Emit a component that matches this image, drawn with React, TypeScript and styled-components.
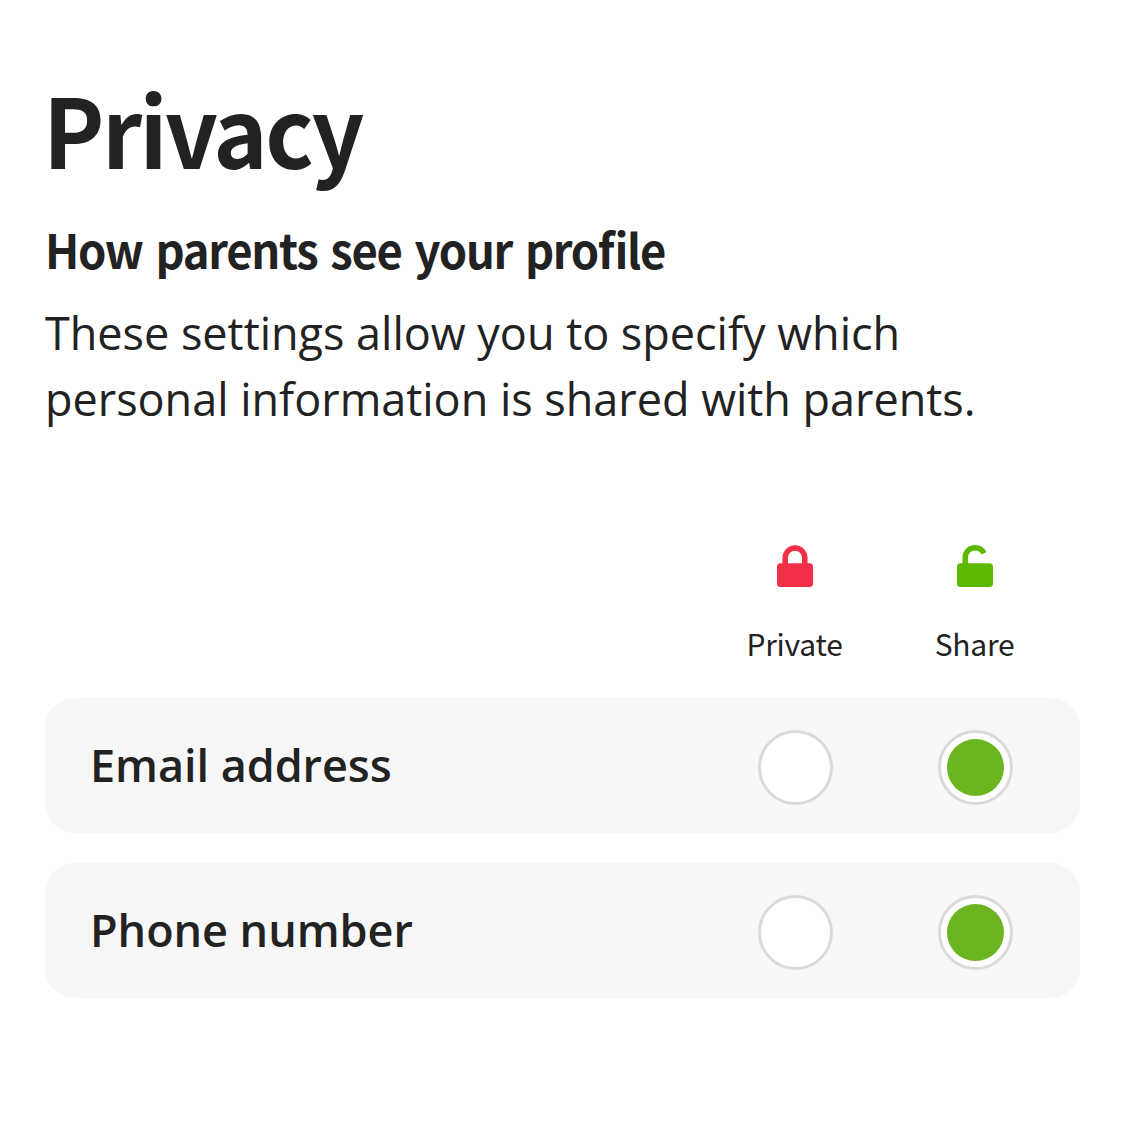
import React from "react";
import styled, { createGlobalStyle } from "styled-components";

const GlobalStyle = createGlobalStyle`
  * { box-sizing: border-box; }
  body { margin: 0; background: #fff; color: #222; font-family: "Open Sans", sans-serif; }
`;
const Page = styled.main`
  min-height: 1141px;
  padding: 73px 45px 0;
`;
const Title = styled.h1`
  margin: 0 0 0 -2px;
  height: 144px;
  line-height: 109px;
  font-family: "Noto Sans CJK SC", sans-serif;
  font-size: 96px;
  font-weight: 700;
  letter-spacing: -2.7px;
  white-space: nowrap;
`;
const Stretch = styled.span<{ $x: number }>`
  display: inline-block;
  transform: scaleX(${(p) => p.$x});
  transform-origin: left center;
`;
const Subtitle = styled.h2`
  margin: 0;
  height: 83px;
  line-height: 63px;
  font-family: "Noto Sans CJK SC", sans-serif;
  font-size: 47.5px;
  font-weight: 700;
  letter-spacing: -1.35px;
  word-spacing: 4px;
  font-feature-settings: "liga" 1;
  white-space: nowrap;
`;
const Description = styled.p`
  margin: 0;
  font-size: 45px;
  line-height: 66px;
  letter-spacing: -0.02px;
  white-space: nowrap;
`;
const Columns = styled.header`
  display: grid;
  grid-template-columns: 1fr 180px 180px;
  margin-top: 113px;
  padding-right: 15px;
  height: 153px;
`;
const Column = styled.div`
  display: flex;
  flex-direction: column;
  align-items: center;
  font: 30px/44px "Noto Sans CJK SC", sans-serif;
  svg { display: block; width: 36px; height: 42px; margin-bottom: 34px; }
`;
const ColumnName = styled.span`
  margin-right: 1px;
  letter-spacing: -0.25px;
`;
const Row = styled.section`
  display: grid;
  grid-template-columns: 1fr 180px 180px;
  align-items: center;
  height: 135px;
  margin-bottom: 30px;
  padding: 3px 15px 0 45px;
  border-radius: 30px;
  background: #f7f7f7;
`;
const Label = styled.span`
  padding-bottom: 4px;
  font-size: 45px;
  font-weight: 600;
  line-height: 66px;
  letter-spacing: -0.05px;
`;
const Radio = styled.button`
  display: grid;
  place-items: center;
  justify-self: center;
  width: 75px;
  height: 75px;
  padding: 0;
  border: 3px solid #dadada;
  border-radius: 50%;
  background: #fff;
`;
const Dot = styled.span`
  width: 57px;
  height: 57px;
  border-radius: 50%;
  background: #6bb521;
`;

function Setting({ label }: { label: string }) {
  const [shared, setShared] = React.useState(true);
  return (
    <Row role="radiogroup" aria-label={label}>
      <Label>{label}</Label>
      <Radio role="radio" aria-checked={!shared} onClick={() => setShared(false)}>{!shared && <Dot />}</Radio>
      <Radio role="radio" aria-checked={shared} onClick={() => setShared(true)}>{shared && <Dot />}</Radio>
    </Row>
  );
}

export default function App() {
  return (
    <>
      <GlobalStyle />
      <Page>
        <Title><Stretch $x={0.96}>Privacy</Stretch></Title>
        <Subtitle><Stretch $x={0.955}>How parents see your profile</Stretch></Subtitle>
        <Description>These settings allow you to specify which<br />personal information is shared with parents.</Description>
        <Columns>
          <span />
          <Column>
            <svg viewBox="0 0 36 42" fill="#f12f47"><rect y="18.3" width="36" height="23.7" rx="3.5" /><path d="M8.2 20v-7.2a9.8 9.8 0 0 1 19.6 0V20" fill="none" stroke="#f12f47" strokeWidth="5.5" /></svg>
            <ColumnName>Private</ColumnName>
          </Column>
          <Column>
            <svg viewBox="0 0 36 42" fill="#5bb900"><rect y="18.3" width="36" height="23.7" rx="3.5" /><path d="M8.2 20v-7.2C8.2 7 12.5 2.8 18 2.8c4 0 7.3 2 9.1 5.5" fill="none" stroke="#5bb900" strokeWidth="5.5" /></svg>
            <ColumnName>Share</ColumnName>
          </Column>
        </Columns>
        <Setting label="Email address" />
        <Setting label="Phone number" />
      </Page>
    </>
  );
}
